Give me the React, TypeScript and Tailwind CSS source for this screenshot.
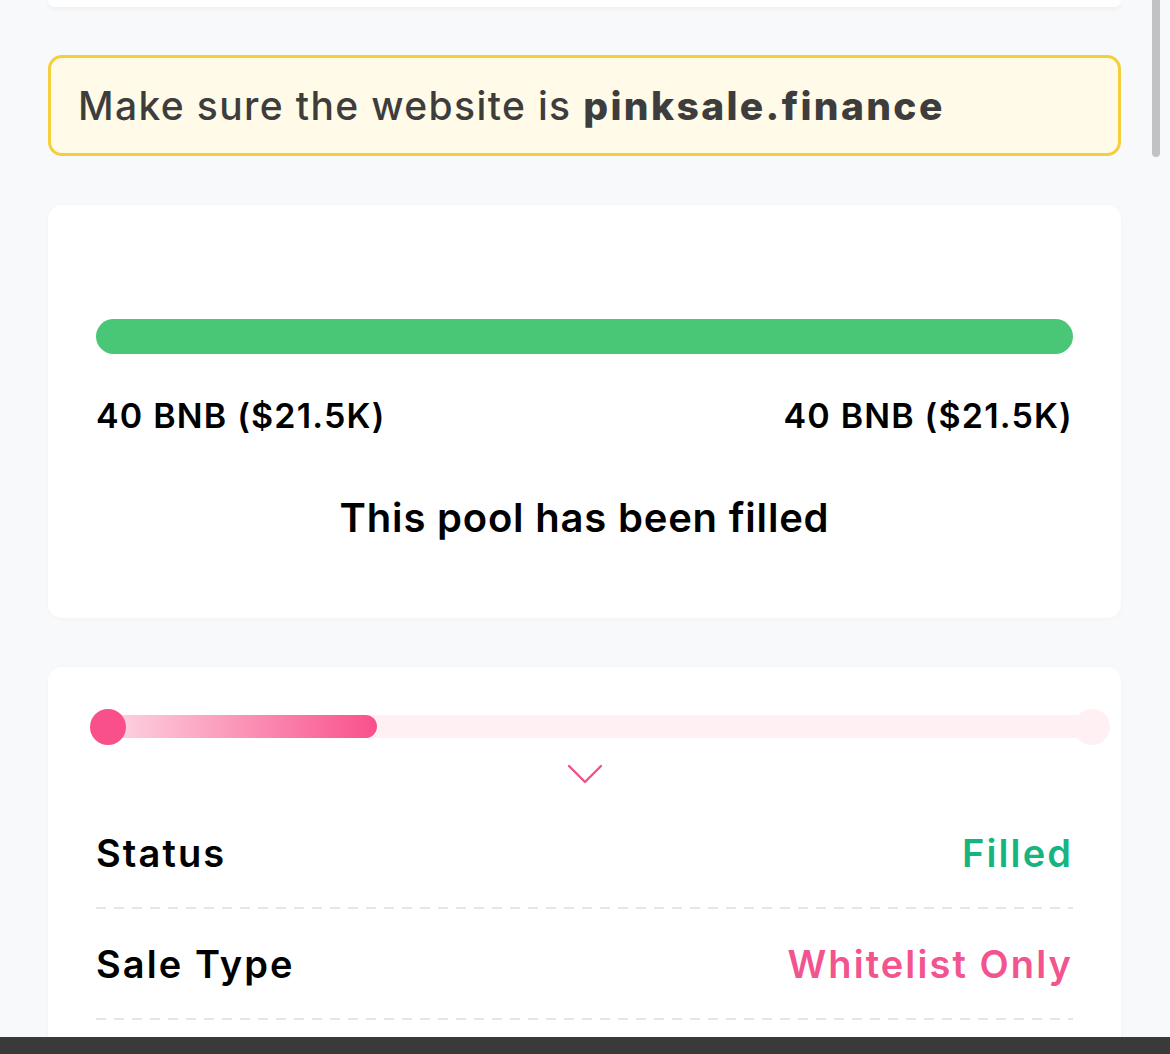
type InfoRow = {
  label: string;
  value: string;
  valueClass: string;
};

const infoRows: InfoRow[] = [
  { label: 'Status', value: 'Filled', valueClass: 'text-[#16b57f]' },
  { label: 'Sale Type', value: 'Whitelist Only', valueClass: 'text-[#f2548f]' },
];

function DashedLine() {
  return (
    <div className="h-[2px] w-full bg-[linear-gradient(to_right,#e6e6e6_10px,transparent_10px)] bg-[length:18px_2px]" />
  );
}

function StageSlider() {
  return (
    <div className="relative ml-[42px] mr-[11px] h-9">
      <div className="absolute left-[18px] right-[18px] top-[6px] h-[23px] rounded-full bg-[#fff0f4]" />
      <div className="absolute left-[18px] top-[6px] h-[23px] w-[269px] rounded-r-full bg-[linear-gradient(to_right,#fdd6e2,#f9508c)]" />
      <div className="absolute left-0 top-0 h-9 w-9 rounded-full bg-[#f94f8b]" />
      <div className="absolute right-0 top-0 h-9 w-9 rounded-full bg-[#fff0f4]" />
    </div>
  );
}

export default function App() {
  return (
    <main className="relative h-[1054px] overflow-hidden bg-[#f8f9fb] font-['Inter',sans-serif] text-black">
      <div className="mx-auto w-full px-12 pr-[49px]">
        <div className="h-[7px] rounded-b-[14px] bg-white shadow-[0_2px_6px_rgba(0,0,0,0.05)]" />

        <div className="mt-12 flex h-[101px] items-center rounded-[14px] border-[3px] border-[#f4ce3c] bg-[#fffbe8] px-[27px]">
          <p className="text-[39px] font-medium leading-none tracking-[0.035em] text-[#3d3d3d]">
            Make sure the website is{' '}
            <span className="font-extrabold tracking-[0.06em]">pinksale.finance</span>
          </p>
        </div>

        <section className="mt-[49px] h-[413px] rounded-[14px] bg-white px-12 pt-[114px] shadow-[0_1px_4px_rgba(0,0,0,0.03)]">
          <div className="h-[35px] w-full rounded-full bg-[#4ac776]" />
          <div className="mt-[42px] flex items-center justify-between text-[34px] font-semibold leading-[40px] tracking-[0.035em]">
            <span>40 BNB ($21.5K)</span>
            <span>40 BNB ($21.5K)</span>
          </div>
          <p className="mt-[58px] text-center text-[40px] font-semibold leading-[48px] tracking-[0.02em]">
            This pool has been filled
          </p>
        </section>

        <section className="mt-[49px] rounded-t-[14px] bg-white pb-10 pt-[42px] shadow-[0_1px_4px_rgba(0,0,0,0.03)]">
          <StageSlider />
          <div className="mt-[19px] flex justify-center">
            <svg
              width="36"
              height="20"
              viewBox="0 0 36 20"
              fill="none"
              stroke="#f0508b"
              strokeWidth="2.4"
              strokeLinecap="round"
              strokeLinejoin="round"
              aria-hidden="true"
            >
              <path d="M2 2 L18 18 L34 2" />
            </svg>
          </div>
          <div className="mt-[14px] px-12">
            {infoRows.map((row) => (
              <div key={row.label}>
                <div className="flex h-[109px] items-center justify-between text-[38px] font-semibold leading-none tracking-[0.055em]">
                  <span>{row.label}</span>
                  <span className={row.valueClass}>{row.value}</span>
                </div>
                <DashedLine />
              </div>
            ))}
          </div>
        </section>
      </div>

      <div className="absolute right-[10px] top-0 h-[157px] w-2 rounded-b-full bg-[#c1c2c6]" />
      <div className="absolute bottom-0 left-0 right-0 h-[17px] bg-[#3a3a3a]" />
    </main>
  );
}
